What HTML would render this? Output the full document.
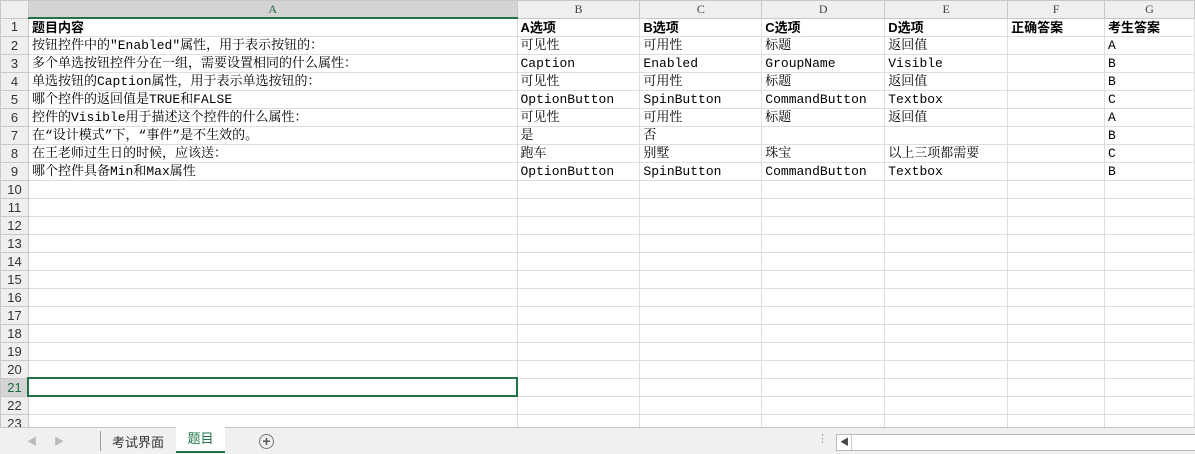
<!DOCTYPE html>
<html><head><meta charset="utf-8"><style>
body{margin:0;width:1195px;height:453px;overflow:hidden;background:#fff;position:relative;font-family:"Liberation Mono","Noto Serif CJK SC",monospace;}
table{border-collapse:collapse;table-layout:fixed;position:absolute;left:0;top:0;}
td{border:1px solid #dedede;height:16px;padding:1px 0 0 3px;font-size:13px;line-height:16px;white-space:nowrap;overflow:visible;color:#000;}
tr.h td{background:#efefef;color:#444;text-align:center;font-family:"Liberation Serif",serif;font-size:12px;height:16px;border-color:#c8c8c8;padding:0;line-height:16px}
td.r{background:#efefef;color:#333;text-align:center;padding:0;font-family:"Liberation Sans",sans-serif;font-size:13px;border-color:#c8c8c8;height:17px}
tr.h td.a{background:#d4d4d4;color:#1e6b3c;border-bottom:2px solid #217346}
.b{font-family:"Liberation Sans","Noto Sans CJK SC",sans-serif;font-weight:bold;}
.sel{position:absolute;left:27px;top:377px;width:487px;height:16px;border:2px solid #217346;}
.bar{position:absolute;left:0;top:427px;width:1195px;height:26px;background:#f0f0f0;border-top:1px solid #c6c6c6;font-family:"Liberation Sans","Noto Sans CJK SC",sans-serif;font-size:13px;}
</style></head><body>
<table>
<colgroup><col style="width:28px"><col style="width:489px"><col style="width:123px"><col style="width:122px"><col style="width:123px"><col style="width:123px"><col style="width:97px"><col style="width:90px"></colgroup>
<tr class="h"><td></td><td class="a">A</td><td>B</td><td>C</td><td>D</td><td>E</td><td>F</td><td>G</td></tr>
<tr><td class="r">1</td><td class="b">题目内容</td><td class="b">A选项</td><td class="b">B选项</td><td class="b">C选项</td><td class="b">D选项</td><td class="b">正确答案</td><td class="b">考生答案</td></tr>
<tr><td class="r">2</td><td>按钮控件中的"Enabled"属性，用于表示按钮的：</td><td>可见性</td><td>可用性</td><td>标题</td><td>返回值</td><td></td><td>A</td></tr>
<tr><td class="r">3</td><td>多个单选按钮控件分在一组，需要设置相同的什么属性：</td><td>Caption</td><td>Enabled</td><td>GroupName</td><td>Visible</td><td></td><td>B</td></tr>
<tr><td class="r">4</td><td>单选按钮的Caption属性，用于表示单选按钮的：</td><td>可见性</td><td>可用性</td><td>标题</td><td>返回值</td><td></td><td>B</td></tr>
<tr><td class="r">5</td><td>哪个控件的返回值是TRUE和FALSE</td><td>OptionButton</td><td>SpinButton</td><td>CommandButton</td><td>Textbox</td><td></td><td>C</td></tr>
<tr><td class="r">6</td><td>控件的Visible用于描述这个控件的什么属性：</td><td>可见性</td><td>可用性</td><td>标题</td><td>返回值</td><td></td><td>A</td></tr>
<tr><td class="r">7</td><td>在“设计模式”下，“事件”是不生效的。</td><td>是</td><td>否</td><td></td><td></td><td></td><td>B</td></tr>
<tr><td class="r">8</td><td>在王老师过生日的时候，应该送：</td><td>跑车</td><td>别墅</td><td>珠宝</td><td>以上三项都需要</td><td></td><td>C</td></tr>
<tr><td class="r">9</td><td>哪个控件具备Min和Max属性</td><td>OptionButton</td><td>SpinButton</td><td>CommandButton</td><td>Textbox</td><td></td><td>B</td></tr>
<tr><td class="r">10</td><td></td><td></td><td></td><td></td><td></td><td></td><td></td></tr>
<tr><td class="r">11</td><td></td><td></td><td></td><td></td><td></td><td></td><td></td></tr>
<tr><td class="r">12</td><td></td><td></td><td></td><td></td><td></td><td></td><td></td></tr>
<tr><td class="r">13</td><td></td><td></td><td></td><td></td><td></td><td></td><td></td></tr>
<tr><td class="r">14</td><td></td><td></td><td></td><td></td><td></td><td></td><td></td></tr>
<tr><td class="r">15</td><td></td><td></td><td></td><td></td><td></td><td></td><td></td></tr>
<tr><td class="r">16</td><td></td><td></td><td></td><td></td><td></td><td></td><td></td></tr>
<tr><td class="r">17</td><td></td><td></td><td></td><td></td><td></td><td></td><td></td></tr>
<tr><td class="r">18</td><td></td><td></td><td></td><td></td><td></td><td></td><td></td></tr>
<tr><td class="r">19</td><td></td><td></td><td></td><td></td><td></td><td></td><td></td></tr>
<tr><td class="r">20</td><td></td><td></td><td></td><td></td><td></td><td></td><td></td></tr>
<tr><td class="r" style="background:#d4d4d4;color:#1e6b3c">21</td><td></td><td></td><td></td><td></td><td></td><td></td><td></td></tr>
<tr><td class="r">22</td><td></td><td></td><td></td><td></td><td></td><td></td><td></td></tr>
<tr><td class="r">23</td><td></td><td></td><td></td><td></td><td></td><td></td><td></td></tr>
</table>
<div class="sel"></div>
<div class="bar">
<span style="position:absolute;left:27px;top:5px;color:#bbb;font-size:10px">◀</span>
<span style="position:absolute;left:54px;top:5px;color:#bbb;font-size:10px">▶</span>
<div style="position:absolute;left:100px;top:3px;width:1px;height:20px;background:#999"></div>
<span style="position:absolute;left:112px;top:4px;color:#333">考试界面</span>
<div style="position:absolute;left:176px;top:-1px;width:49px;height:24px;background:#fff;border-bottom:2px solid #217346;color:#217346;text-align:center;line-height:24px">题目</div>
<div style="position:absolute;left:259px;top:6px;width:13px;height:13px;border:1px solid #777;border-radius:50%;text-align:center;line-height:13px;font-size:14px;color:#555;font-weight:bold">+</div>
<span style="position:absolute;left:817px;top:4px;color:#999;font-size:11px">⋮</span>
<div style="position:absolute;left:836px;top:6px;width:359px;height:15px;background:#fff;border:1px solid #bbb"><span style="position:absolute;left:3px;top:0;font-size:9px;color:#444">◀</span><div style="position:absolute;left:14px;top:0;width:1px;height:15px;background:#ccc"></div></div>
</div>
</body></html>
